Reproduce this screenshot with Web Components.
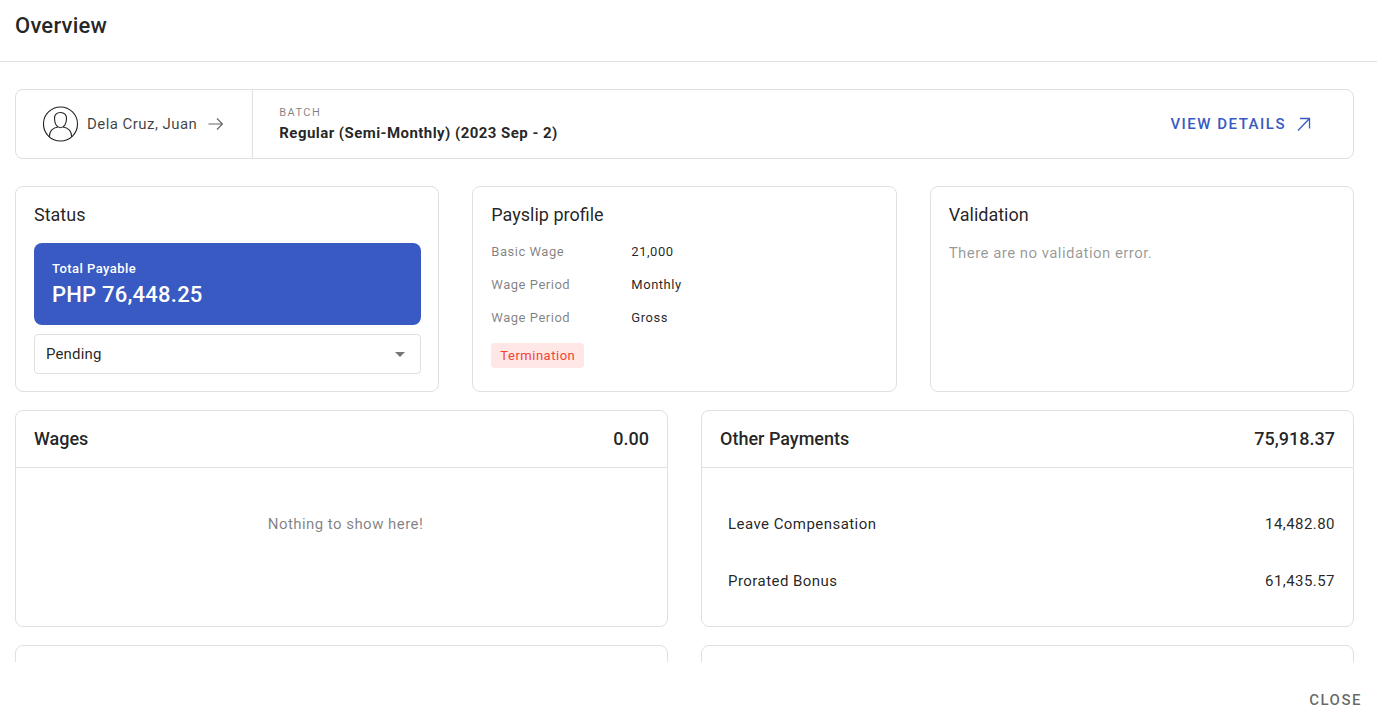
<!DOCTYPE html>
<html lang="en">
<head>
<meta charset="utf-8">
<title>Payslip overview</title>
<style>
  html, body { margin: 0; height: 100%; }
  body {
    --line: #e0e0e0;
    --ink: rgba(0, 0, 0, .87);
    --muted: rgba(0, 0, 0, .5);
    --primary: #385ac2;
    --track: .03em;
    --track-wide: .04em;
    --track-caps: .1em;
    font-family: Roboto, "Liberation Sans", sans-serif;
    font-size: 15px;
    line-height: 24px;
    letter-spacing: var(--track);
    color: var(--ink);
    background: #fff;
  }
</style>
</head>
<body>
<payslip-overview></payslip-overview>

<script>
const define = (name, html) => {
  const template = document.createElement('template');
  template.innerHTML = html;
  customElements.define(name, class extends HTMLElement {
    constructor() {
      super();
      this.attachShadow({ mode: 'open' }).append(template.content.cloneNode(true));
    }
  });
};

define('dialog-shell', `
  <style>
    :host { display: flex; flex-direction: column; height: 100vh; }
    header { flex: none; padding: 10px 15px 19px; border-bottom: 1px solid var(--line); }
    h1 { margin: 0; font-size: 22px; line-height: 32px; font-weight: 500; letter-spacing: .01em; }
    main { flex: 1; min-height: 0; overflow: auto; scrollbar-width: none; padding: 27px 23px 27px 15px; }
    footer { flex: none; display: flex; justify-content: flex-end; padding: 29px 15px 12px; }
  </style>
  <header><h1><slot name="title"></slot></h1></header>
  <main><slot></slot></main>
  <footer><slot name="actions"></slot></footer>
`);

define('close-button', `
  <style>
    :host { display: block; }
    button { display: block; margin: 0; padding: 0; border: 0; background: none; font: inherit; line-height: 18px;
      font-weight: 500; letter-spacing: var(--track-caps); color: rgba(0, 0, 0, .6); cursor: pointer; }
  </style>
  <button type="button"><slot></slot></button>
`);

define('person-link', `
  <style>
    :host { display: block; }
    a { display: flex; align-items: center; color: rgba(0, 0, 0, .75); text-decoration: none; }
    .avatar { width: 36px; height: 36px; margin-right: 8px; }
    .arrow { width: 16px; height: 16px; margin-left: 10px; }
    svg { fill: none; }
  </style>
  <a href="#employee">
    <svg class="avatar" viewBox="0 0 36 36" stroke="#222" stroke-width="1.1" aria-hidden="true">
      <circle cx="17.500" cy="18" r="17"/>
      <path d="M17.500 6.500c-4 0-6 2.500-6 6.100 0 5 2.300 9.200 6 9.200s6-4.200 6-9.200c0-3.600-2-6.100-6-6.100z"/>
      <path d="M6.300 31c0-6 2.800-9 8.700-10M28.700 31c0-6-2.800-9-8.700-10"/>
    </svg>
    <slot></slot>
    <svg class="arrow" viewBox="0 0 16 16" stroke="#666" stroke-width="1.2" aria-hidden="true"><path d="M1.500 8h14M10 2.500 15.500 8 10 13.500"/></svg>
  </a>
`);

define('batch-bar', `
  <style>
    :host { display: flex; align-items: stretch; border: 1px solid var(--line); border-radius: 8px; }
    .person { display: flex; align-items: center; padding: 16px 29px 16px 27px; border-right: 1px solid var(--line); }
    .batch { flex: 1; display: flex; flex-direction: column; justify-content: center; padding: 0 26px; }
    .label { font-size: 11px; line-height: 18px; letter-spacing: .13em; color: var(--muted); }
    .name { line-height: 22px; font-weight: 700; }
    a { display: flex; align-items: center; gap: 10px; margin-right: 41px; color: var(--primary);
      font-weight: 500; letter-spacing: var(--track-caps); text-decoration: none; }
    svg { width: 16px; height: 16px; fill: none; stroke: currentColor; stroke-width: 1.3; }
  </style>
  <div class="person"><slot name="person"></slot></div>
  <div class="batch">
    <span class="label">BATCH</span>
    <span class="name"><slot></slot></span>
  </div>
  <a href="#details">VIEW DETAILS
    <svg viewBox="0 0 16 16" aria-hidden="true"><path d="M2 14.500 13.500 2.500M4 2.500h9.500v10"/></svg>
  </a>
`);

define('info-card', `
  <style>
    :host { display: flow-root; border: 1px solid var(--line); border-radius: 8px; padding: 16px 17px 17px 18px; }
    h2 { margin: 0 0 16px; font-size: 18px; line-height: 24px; font-weight: 400; letter-spacing: normal; }
  </style>
  <h2><slot name="title"></slot></h2>
  <slot></slot>
`);

define('total-banner', `
  <style>
    :host { display: block; padding: 15px 18px; border-radius: 8px; background: var(--primary); color: #fff; }
    .label { font-size: 13px; line-height: 22px; font-weight: 500; }
    .amount { font-size: 22px; line-height: 30px; font-weight: 500; letter-spacing: .01em; }
  </style>
  <div class="label"><slot name="label"></slot></div>
  <div class="amount"><slot></slot></div>
`);

define('status-select', `
  <style>
    :host { display: grid; align-items: center; margin-top: 9px; }
    select, svg { grid-area: 1 / 1; }
    select { appearance: none; box-sizing: border-box; width: 100%; height: 40px; margin: 0; padding: 0 40px 0 11px;
      border: 1px solid var(--line); border-radius: 4px; background: #fff; color: var(--ink); font: inherit; letter-spacing: .01em; }
    svg { justify-self: end; width: 10px; height: 5px; margin-right: 16px; fill: #757575; pointer-events: none; }
  </style>
  <select aria-label="Payslip status"><option>Pending</option></select>
  <svg viewBox="0 0 10 5" aria-hidden="true"><path d="M0 0h10L5 5z"/></svg>
`);

define('profile-list', `
  <style>
    :host { display: block; font-size: 13px; line-height: 18px; letter-spacing: var(--track-wide); }
    dl { display: grid; grid-template-columns: 140px 1fr; row-gap: 15px; margin: 0; }
    dt { color: var(--muted); }
    dd { margin: 0; }
  </style>
  <dl>
    <dt>Basic Wage</dt><dd>21,000</dd>
    <dt>Wage Period</dt><dd>Monthly</dd>
    <dt>Wage Period</dt><dd>Gross</dd>
  </dl>
`);

define('status-chip', `
  <style>
    :host { display: inline-block; margin-top: 16px; padding: 1px 9px 0; border-radius: 4px; background: #fee7e5; color: #f44336;
      font-size: 13px; line-height: 24px; letter-spacing: var(--track-wide); }
  </style>
  <slot></slot>
`);

define('amount-panel', `
  <style>
    :host { display: block; min-height: 215px; border: 1px solid var(--line); border-radius: 8px; }
    header { display: flex; justify-content: space-between; padding: 16px 18px; border-bottom: 1px solid var(--line);
      font-size: 18px; font-weight: 500; letter-spacing: normal; }
    h2 { margin: 0; font: inherit; }
  </style>
  <header><h2><slot name="title"></slot></h2><slot name="total"></slot></header>
  <slot></slot>
`);

define('empty-note', `
  <style>:host { display: block; padding: 44px 18px 44px 26px; text-align: center; color: var(--muted); }</style>
  <slot></slot>
`);

define('payment-table', `
  <style>
    :host { display: block; padding: 27px 18px 17px 26px; }
    table { width: 100%; border-collapse: collapse; }
    th, td { height: 57px; padding: 0; font-weight: 400; }
    th { text-align: left; }
    td { text-align: right; }
  </style>
  <table>
    <tr><th scope="row">Leave Compensation</th><td>14,482.80</td></tr>
    <tr><th scope="row">Prorated Bonus</th><td>61,435.57</td></tr>
  </table>
`);

define('payslip-overview', `
  <style>
    :host { display: block; }
    .three, .two { display: grid; column-gap: 33px; row-gap: 18px; }
    .three { grid-template-columns: repeat(3, 1fr); margin: 27px 0 18px; }
    .two { grid-template-columns: repeat(2, 1fr); }
    .ok { margin: 0; line-height: 20px; color: rgba(0, 0, 0, .42); }
  </style>
  <dialog-shell>
    <span slot="title">Overview</span>
    <batch-bar>
      <person-link slot="person">Dela Cruz, Juan</person-link>
      Regular (Semi-Monthly) (2023 Sep - 2)
    </batch-bar>
    <div class="three">
      <info-card>
        <span slot="title">Status</span>
        <total-banner><span slot="label">Total Payable</span>PHP 76,448.25</total-banner>
        <status-select></status-select>
      </info-card>
      <info-card>
        <span slot="title">Payslip profile</span>
        <profile-list></profile-list>
        <status-chip>Termination</status-chip>
      </info-card>
      <info-card>
        <span slot="title">Validation</span>
        <p class="ok">There are no validation error.</p>
      </info-card>
    </div>
    <div class="two">
      <amount-panel>
        <span slot="title">Wages</span><span slot="total">0.00</span>
        <empty-note>Nothing to show here!</empty-note>
      </amount-panel>
      <amount-panel>
        <span slot="title">Other Payments</span><span slot="total">75,918.37</span>
        <payment-table></payment-table>
      </amount-panel>
      <amount-panel></amount-panel>
      <amount-panel></amount-panel>
    </div>
    <close-button slot="actions">CLOSE</close-button>
  </dialog-shell>
`);
</script>
</body>
</html>
